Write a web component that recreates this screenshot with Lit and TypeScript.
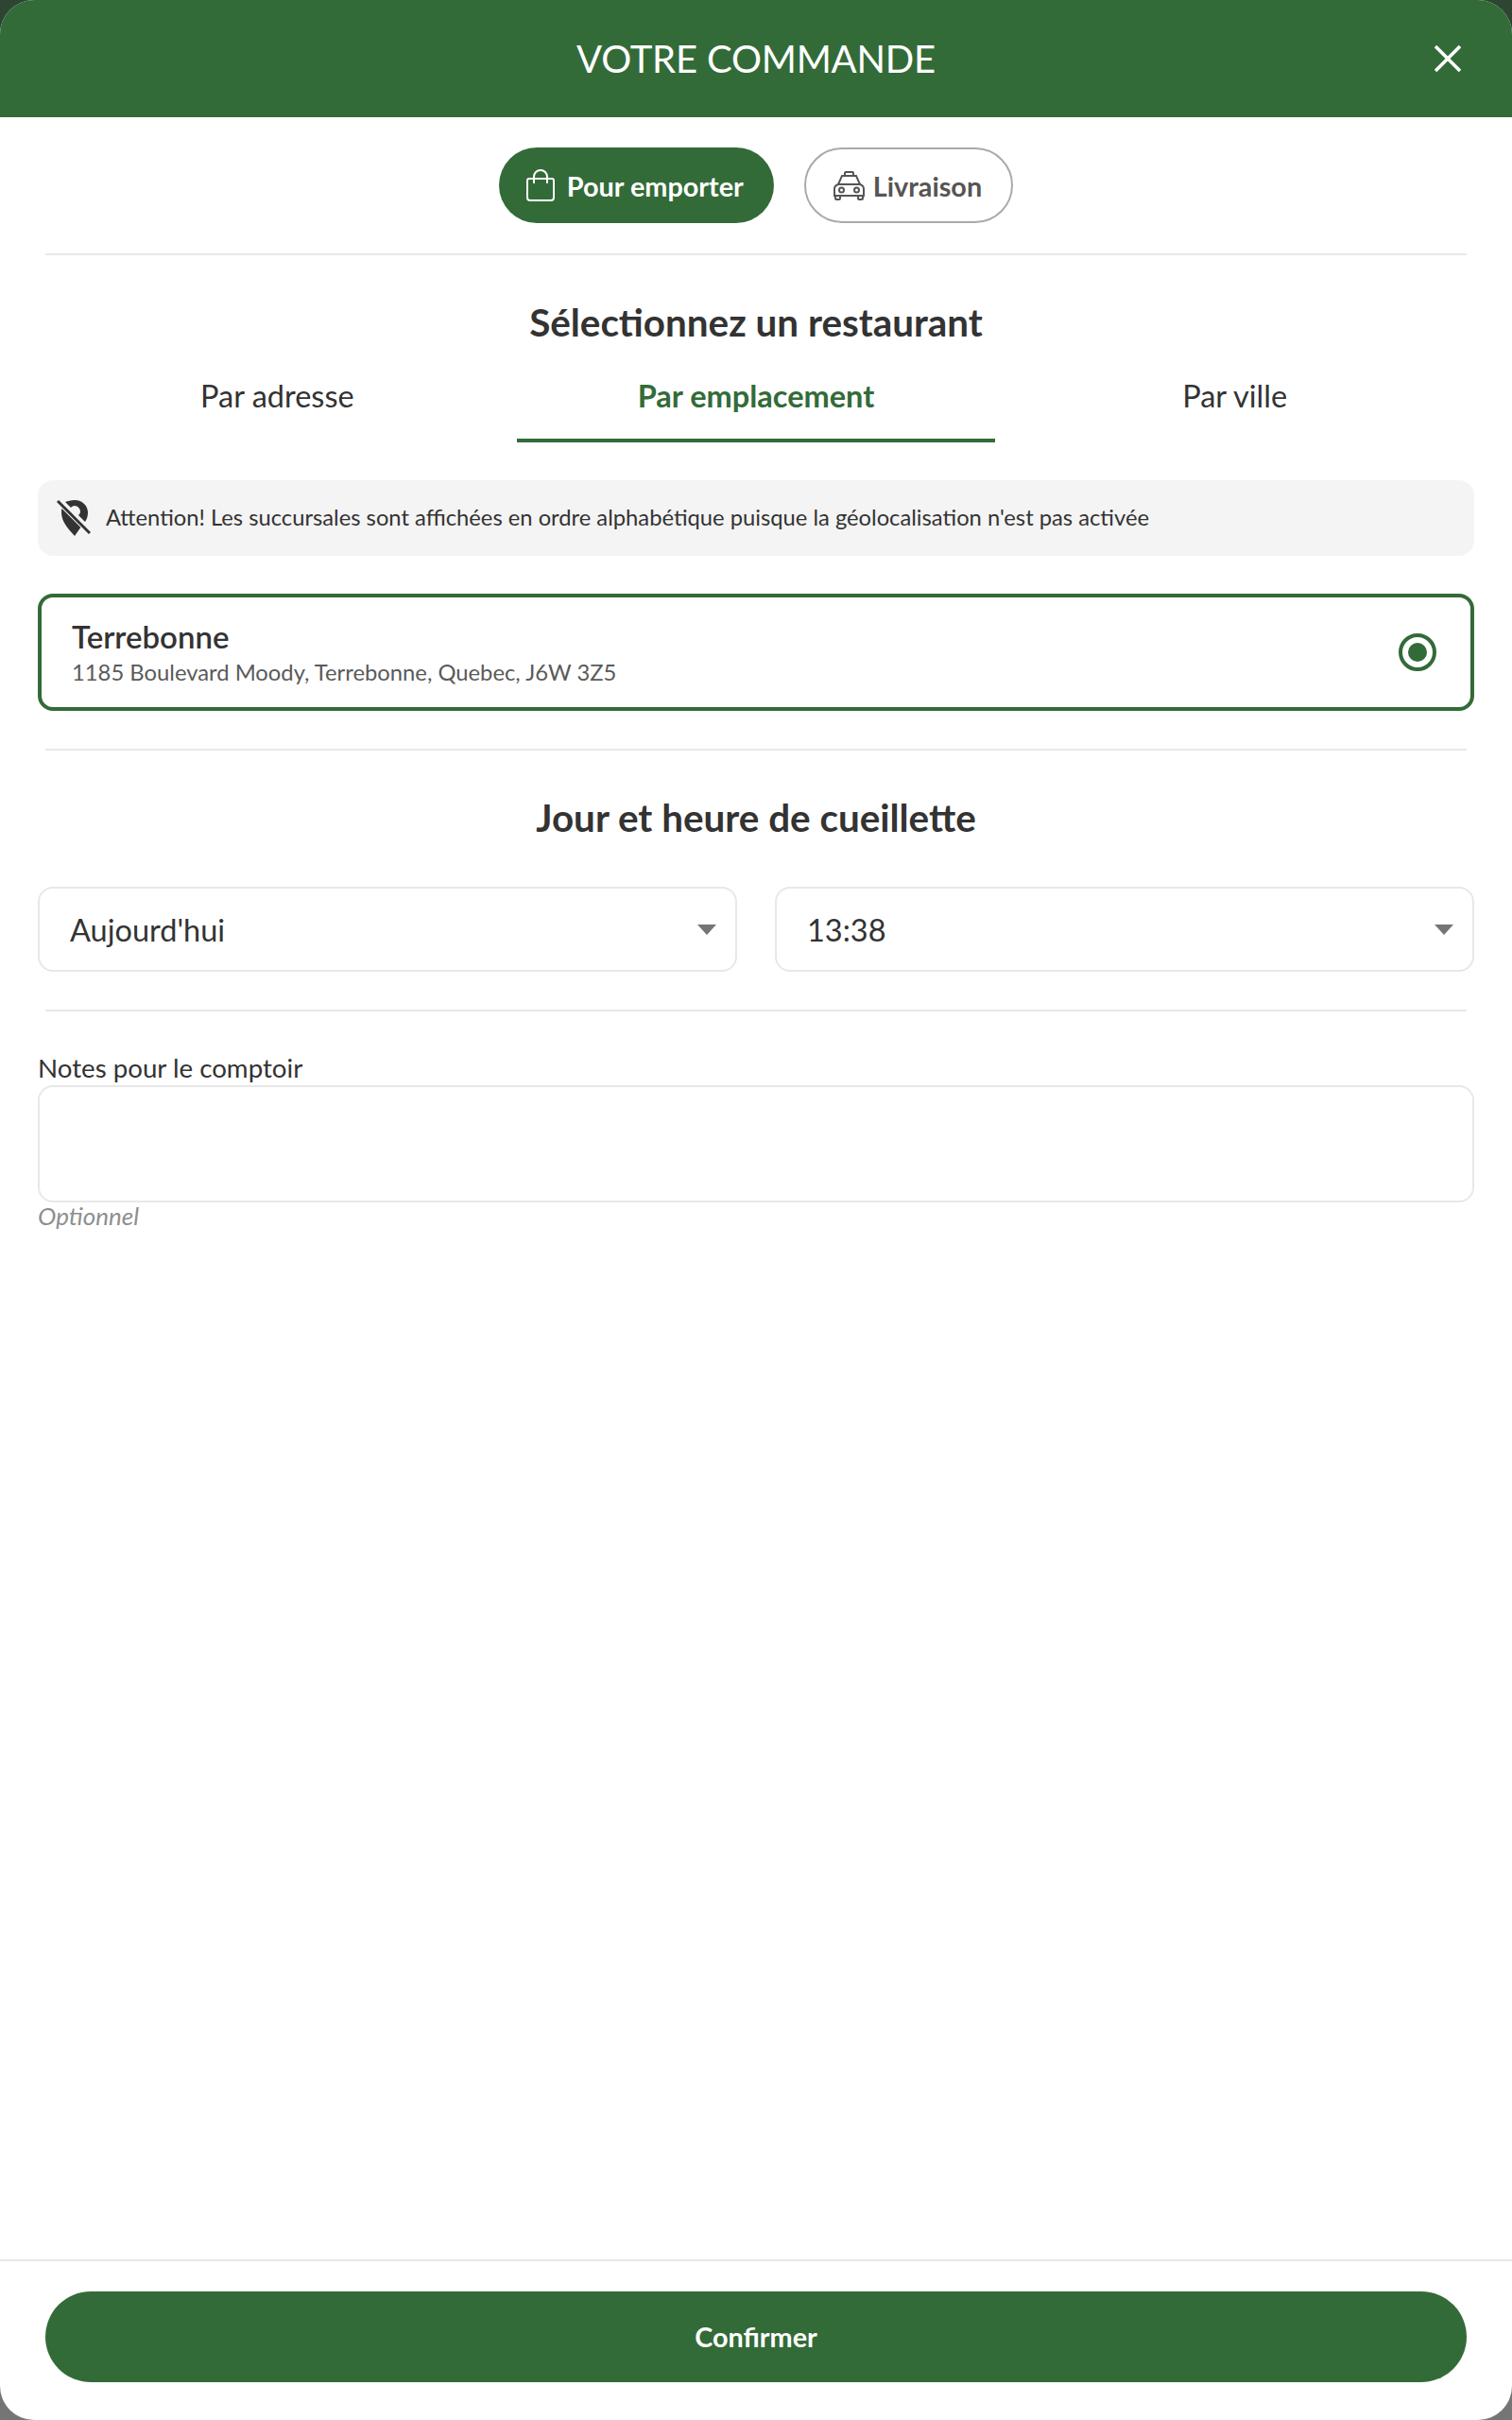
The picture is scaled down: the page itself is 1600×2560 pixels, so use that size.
import { LitElement, html, css } from "lit";
import { customElement } from "lit/decorators.js";

@customElement("app-root")
export class AppRoot extends LitElement {
  static styles = css`
    :host { display: block; width: 1600px; height: 2560px; background: linear-gradient(#2e4534 0 120px, #757575 120px); font-family: Lato, "Liberation Sans", sans-serif; color: #333; }
    * { box-sizing: border-box; }
    .modal { width: 1600px; height: 2560px; background: #fff; border-radius: 36px; overflow: hidden; display: flex; flex-direction: column; }
    .head { height: 124px; flex: none; background: #336b38; color: #fff; display: flex; align-items: center; justify-content: center; position: relative; font-size: 40px; line-height: 48px; letter-spacing: -0.2px; }
    .close { position: absolute; left: 1518px; top: 48px; width: 28px; height: 28px; }
    .body { flex: 1; padding: 32px 40px 0; display: flex; flex-direction: column; }
    .toggle { display: flex; justify-content: center; gap: 32px; }
    .pill { height: 80px; border-radius: 40px; display: flex; align-items: center; font-size: 28.8px; font-weight: 700; }
    .pill span { padding-top: 2px; }
    .pill.on { background: #336b38; color: #fff; padding: 0 32px 0 29px; gap: 13px; }
    .pill.off { border: 2px solid #aaa; color: #555; padding: 0 31px 0 29px; gap: 9px; }
    .rule { height: 2px; background: #e8e8e8; margin: 0 8px; flex: none; }
    .r1 { margin-top: 32px; }
    h2 { margin: 0; text-align: center; font-size: 40.4px; line-height: 48px; font-weight: 700; color: #333; }
    .h1 { margin-top: 47px; }
    .tabs { display: grid; grid-template-columns: repeat(3, 1fr); margin-top: 17px; }
    .tab { height: 86px; display: flex; align-items: center; justify-content: center; font-size: 32.5px; padding-bottom: 10px; border-bottom: 4px solid transparent; }
    .tab.on { color: #336b38; font-weight: 700; border-color: #336b38; }
    .notice { margin-top: 40px; height: 80px; background: #f4f4f4; border-radius: 16px; display: flex; align-items: center; padding: 0 0 2px 20px; gap: 16px; font-size: 23.75px; }
    .card { margin-top: 40px; height: 124px; border: 4px solid #336b38; border-radius: 16px; display: flex; align-items: center; justify-content: space-between; padding: 0 36px 0 32px; }
    .name { font-size: 33px; line-height: 38px; font-weight: 600; }
    .addr { font-size: 23.8px; line-height: 32px; margin-top: 3px; color: #5a5a5a; }
    .radio { width: 40px; height: 40px; border-radius: 50%; border: 4px solid #336b38; display: flex; align-items: center; justify-content: center; }
    .radio i { width: 20px; height: 20px; border-radius: 50%; background: #336b38; display: block; }
    .r2 { margin-top: 40px; }
    .h2 { margin-top: 47px; }
    .selects { display: grid; grid-template-columns: 1fr 1fr; gap: 40px; margin-top: 49px; }
    .select { height: 90px; border: 2px solid #e8e8e8; border-radius: 16px; display: flex; align-items: center; justify-content: space-between; padding: 0 20px 0 32px; font-size: 32.5px; }
    .caret { width: 0; height: 0; border-left: 10px solid transparent; border-right: 10px solid transparent; border-top: 11px solid #757575; }
    .r3 { margin-top: 40px; }
    .label { margin-top: 42px; font-size: 27.7px; line-height: 36px; }
    .area { height: 124px; border: 2px solid #e8e8e8; border-radius: 16px; }
    .hint { font-size: 26px; line-height: 28px; font-style: italic; color: #8f8f8f; }
    .foot { flex: none; height: 170px; border-top: 2px solid #e8e8e8; padding: 32px 48px 0; }
    .confirm { height: 96px; border-radius: 48px; background: #336b38; color: #fff; font-size: 28.8px; font-weight: 700; display: flex; align-items: center; justify-content: center; }
  `;

  render() {
    return html`
      <div class="modal">
        <div class="head">VOTRE COMMANDE
          <svg class="close" viewBox="0 0 28 28" fill="none" stroke="#fff" stroke-width="3.6"><path d="M1 1 27 27M27 1 1 27"/></svg>
        </div>
        <div class="body">
          <div class="toggle">
            <div class="pill on">
              <svg width="30" height="34" viewBox="0 0 30 34" fill="none" stroke="#fff" stroke-width="2"><path d="M3 10h24a2 2 0 0 1 2 2v18a3 3 0 0 1-3 3H4a3 3 0 0 1-3-3V12a2 2 0 0 1 2-2Z"/><path d="M8 15V8a7 7 0 0 1 14 0v7"/></svg>
              <span>Pour emporter</span>
            </div>
            <div class="pill off">
              <svg width="33" height="31" viewBox="0 0 33 31" fill="none" stroke="#555" stroke-width="2"><path d="M12 5V2a1 1 0 0 1 1-1h7a1 1 0 0 1 1 1v3"/><path d="M9 5h15l4 9H5Z"/><path d="M5 14c-3 1-4 3-4 5v7h31v-7c0-2-1-4-4-5Z"/><circle cx="8.500" cy="20" r="2.500"/><circle cx="24.500" cy="20" r="2.500"/><path d="M2 26v3a1 1 0 0 0 1 1h3a1 1 0 0 0 1-1v-3M26 26v3a1 1 0 0 0 1 1h3a1 1 0 0 0 1-1v-3"/></svg>
              <span>Livraison</span>
            </div>
          </div>
          <div class="rule r1"></div>
          <h2 class="h1">Sélectionnez un restaurant</h2>
          <div class="tabs">
            <div class="tab">Par adresse</div>
            <div class="tab on">Par emplacement</div>
            <div class="tab">Par ville</div>
          </div>
          <div class="notice">
            <svg width="36" height="39" viewBox="0 0 36 39"><path fill="#333" d="M19 1c8 0 14 6 14 13 0 4-1 7-3 10l-7-7c1-1 2-2 2-4 0-3-3-6-6-6-2 0-3 1-4 2L9 3c3-1 6-2 10-2ZM6 9l20 20-7 10C12 31 5 24 5 14c0-2 0-3 1-5Z"/><path d="M1 2 35 36" stroke="#f4f4f4" stroke-width="5"/><path d="M1 2 35 36" stroke="#333" stroke-width="3"/></svg>
            Attention! Les succursales sont affichées en ordre alphabétique puisque la géolocalisation n'est pas activée
          </div>
          <div class="card">
            <div><div class="name">Terrebonne</div><div class="addr">1185 Boulevard Moody, Terrebonne, Quebec, J6W 3Z5</div></div>
            <div class="radio"><i></i></div>
          </div>
          <div class="rule r2"></div>
          <h2 class="h2">Jour et heure de cueillette</h2>
          <div class="selects">
            <div class="select">Aujourd'hui<span class="caret"></span></div>
            <div class="select">13:38<span class="caret"></span></div>
          </div>
          <div class="rule r3"></div>
          <div class="label">Notes pour le comptoir</div>
          <div class="area"></div>
          <div class="hint">Optionnel</div>
        </div>
        <div class="foot"><div class="confirm">Confirmer</div></div>
      </div>
    `;
  }
}
